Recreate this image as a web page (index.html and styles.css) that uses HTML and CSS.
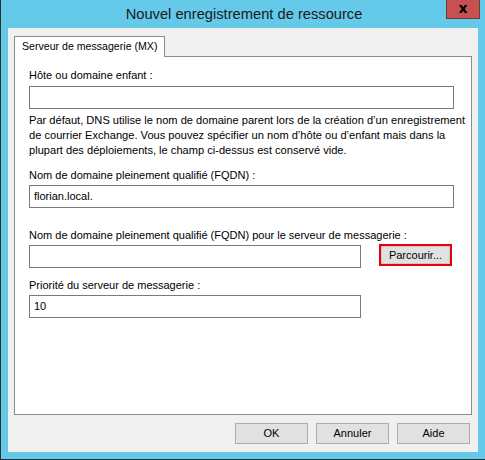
FILE: index.html
```html
<!DOCTYPE html>
<html lang="fr">
<head>
<meta charset="utf-8">
<title>Nouvel enregistrement de ressource</title>
<link rel="stylesheet" href="styles.css">
</head>
<body>
<div class="window">
  <div class="titlebar">
    <div class="title">Nouvel enregistrement de ressource</div>
    <div class="close">x</div>
  </div>
  <div class="client">
    <div class="tabs">
      <div class="tab">Serveur de messagerie (MX)</div>
    </div>
    <div class="panel">
      <div class="label l1">Hôte ou domaine enfant :</div>
      <div class="input full"></div>
      <div class="para">Par défaut, DNS utilise le nom de domaine parent lors de la création d’un enregistrement<br>de courrier Exchange. Vous pouvez spécifier un nom d’hôte ou d’enfant mais dans la<br>plupart des déploiements, le champ ci-dessus est conservé vide.</div>
      <div class="label l2">Nom de domaine pleinement qualifié (FQDN) :</div>
      <div class="input full">florian.local.</div>
      <div class="label l3">Nom de domaine pleinement qualifié (FQDN) pour le serveur de messagerie :</div>
      <div class="row">
        <div class="input short"></div>
        <div class="focus"><div class="btn browse">Parcourir...</div></div>
      </div>
      <div class="label l2">Priorité du serveur de messagerie :</div>
      <div class="input short">10</div>
    </div>
    <div class="buttons">
      <div class="btn">OK</div>
      <div class="btn">Annuler</div>
      <div class="btn">Aide</div>
    </div>
  </div>
</div>
</body>
</html>
```

FILE: styles.css
```css
html, body {
  margin: 0;
  padding: 0;
  background: #65c9ea;
}
body {
  font-family: "Liberation Sans", Arial, sans-serif;
  font-size: 11px;
  color: #000;
}
.window {
  width: 485px;
  height: 460px;
  box-sizing: border-box;
  background: #65c9ea;
  border-left: 1px solid #2d2d30;
  border-bottom: 1px solid #2d2d30;
  padding: 0 7px 7px 7px;
  position: relative;
  overflow: hidden;
}
.titlebar {
  height: 28px;
  display: flex;
  align-items: center;
  justify-content: center;
}
.title {
  font-size: 14.7px;
  color: #1a1a1a;
  margin-left: 2px;
  margin-top: -1px;
}
.close {
  position: absolute;
  top: 0;
  left: 445px;
  width: 32px;
  height: 18px;
  background: #c75050;
  border: 1px solid #6b3a3a;
  border-top: none;
  color: #000;
  font-weight: bold;
  font-family: "DejaVu Sans", sans-serif;
  font-size: 14px;
  line-height: 16px;
  text-align: center;
}
.client {
  background: #f0f0f0;
  height: 424px;
  box-sizing: border-box;
  padding: 8px 6px 0 6px;
}
.tabs {
  display: flex;
  height: 20px;
  position: relative;
  z-index: 1;
}
.tab {
  width: 151px;
  height: 21px;
  box-sizing: border-box;
  background: #fff;
  border: 1px solid #898c95;
  border-bottom: none;
  padding-left: 7px;
  line-height: 19px;
  white-space: nowrap;
  font-size: 10.6px;
}
.panel {
  height: 359px;
  box-sizing: border-box;
  background: #fff;
  border: 1px solid #898c95;
  padding: 11px 0 0 14px;
}
.label {
  line-height: 15px;
  height: 15px;
  white-space: nowrap;
}
.l2 { margin-top: 10px; }
.l3 { margin-top: 20px; }
.input {
  height: 23px;
  box-sizing: border-box;
  border: 1px solid #7a7a7a;
  background: #fff;
  margin-top: 2px;
  padding-left: 4px;
  line-height: 21px;
}
.l1 + .input { margin-top: 3px; }
.full { width: 425px; }
.short { width: 332px; }
.para {
  margin-top: 4px;
  line-height: 15px;
  white-space: nowrap;
  font-size: 11.1px;
}
.row {
  display: flex;
  align-items: flex-start;
  gap: 18px;
}
.focus {
  margin-top: 1px;
  border: 2px solid #e8000f;
  width: 73px;
  height: 22px;
  box-sizing: border-box;
  display: flex;
}
.btn {
  width: 73px;
  height: 21px;
  box-sizing: border-box;
  background: #e1e1e1;
  border: 1px solid #adadad;
  text-align: center;
  line-height: 19px;
}
.browse {
  width: 100%;
  height: 100%;
  line-height: 16px;
  border-color: #c9c9c9;
}
.buttons {
  display: flex;
  justify-content: flex-end;
  gap: 8px;
  margin-top: 8px;
  padding-right: 2px;
}
```
